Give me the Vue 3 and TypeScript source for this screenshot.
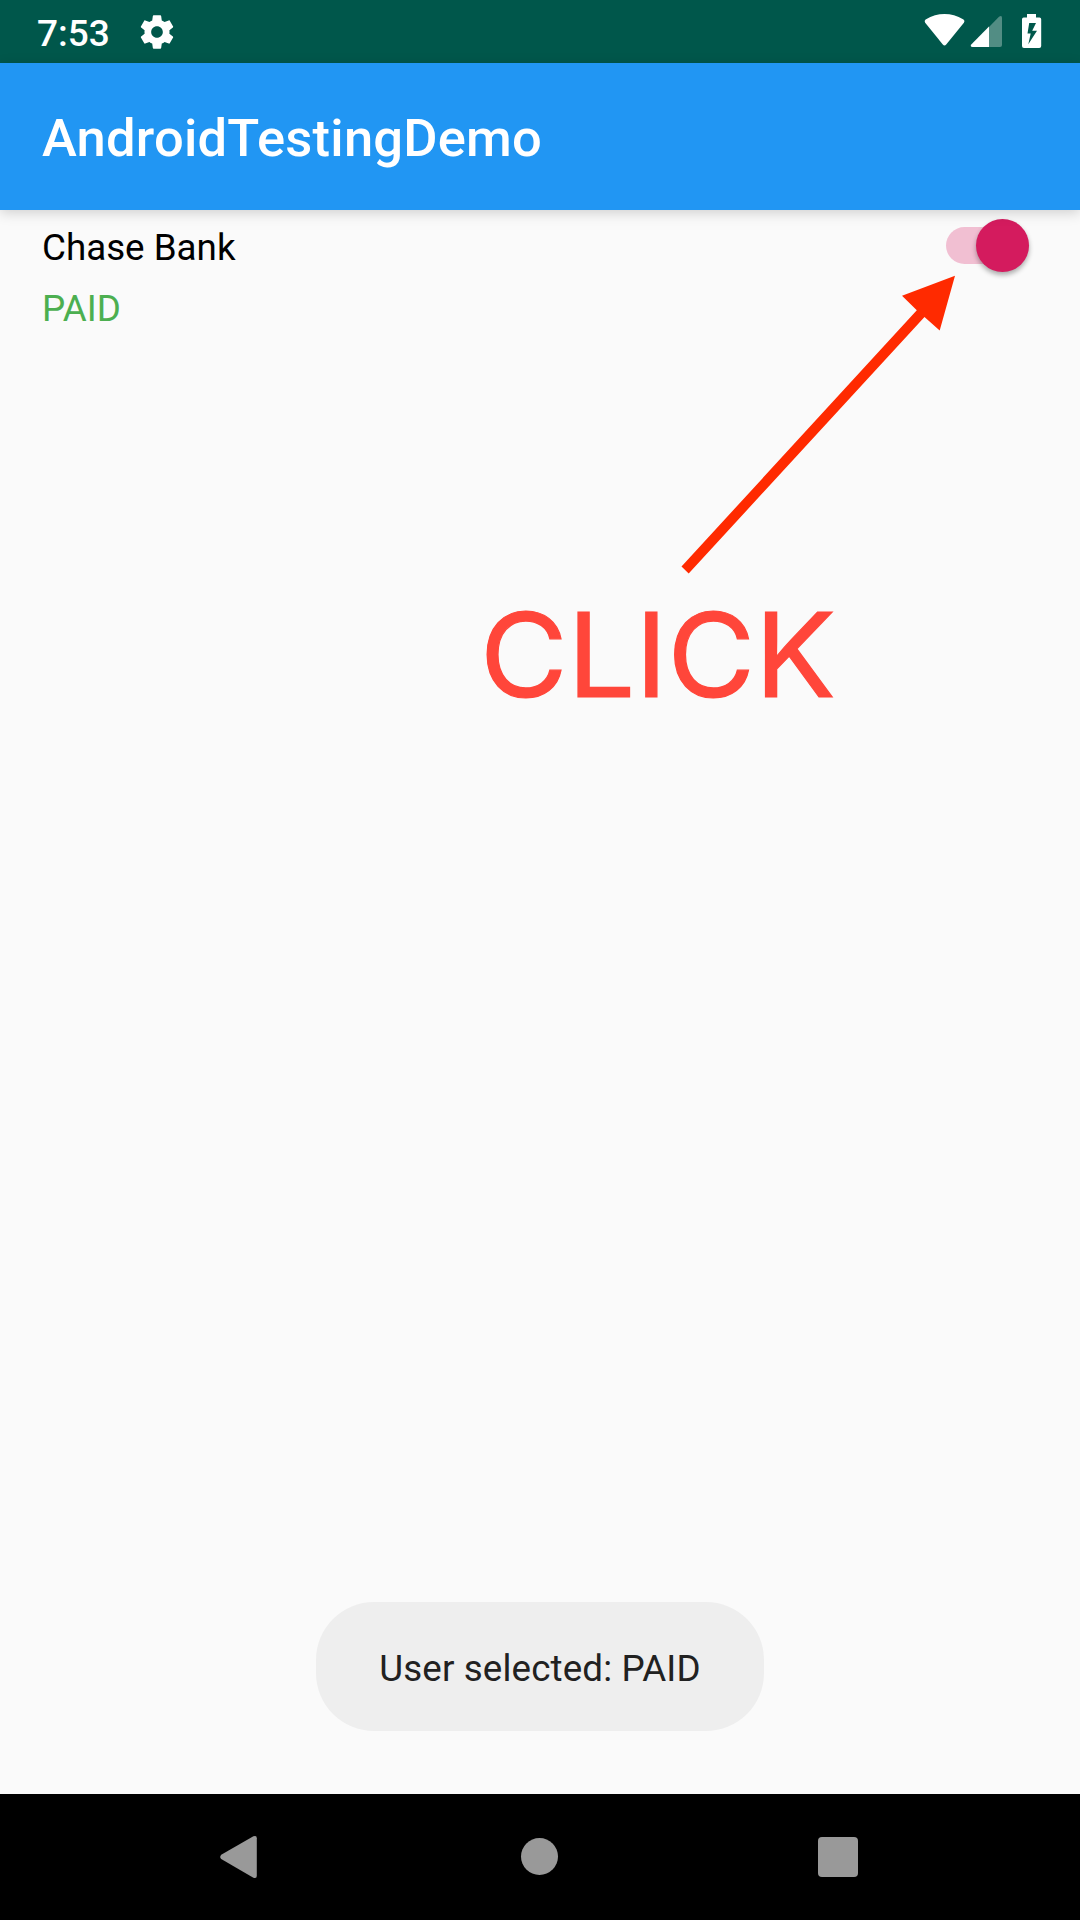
<script setup lang="ts">
import { ref, computed } from 'vue'

const paid = ref(true)
const status = computed<string>(() => (paid.value ? 'PAID' : 'UNPAID'))
</script>

<template>
  <div class="screen">
    <header class="status-bar">
      <div class="status-left">
        <span class="clock">7:53</span>
        <svg class="gear" width="40" height="40" viewBox="0 0 24 24">
          <path fill="#fff" fill-rule="evenodd" d="M19.43 12.98c.04-.32.07-.64.07-.98s-.03-.66-.07-.98l2.11-1.65c.19-.15.24-.42.12-.64l-2-3.46c-.12-.22-.39-.3-.61-.22l-2.49 1c-.52-.4-1.08-.73-1.69-.98l-.38-2.65C14.46 2.18 14.25 2 14 2h-4c-.25 0-.46.18-.49.42l-.38 2.65c-.61.25-1.17.59-1.69.98l-2.49-1c-.23-.09-.49 0-.61.22l-2 3.46c-.13.22-.07.49.12.64l2.11 1.65c-.04.32-.07.65-.07.98s.03.66.07.98l-2.11 1.65c-.19.15-.24.42-.12.64l2 3.46c.12.22.39.3.61.22l2.49-1c.52.4 1.08.73 1.69.98l.38 2.65c.03.24.24.42.49.42h4c.25 0 .46-.18.49-.42l.38-2.65c.61-.25 1.17-.59 1.69-.98l2.49 1c.23.09.49 0 .61-.22l2-3.46c.12-.22.07-.49-.12-.64l-2.11-1.65zM12 15.5c-1.93 0-3.5-1.57-3.5-3.5s1.57-3.5 3.5-3.5 3.5 1.57 3.5 3.5-1.57 3.5-3.5 3.5z" />
        </svg>
      </div>
      <svg class="status-icons" width="180" height="63" viewBox="0 0 180 63">
        <path fill="#fff" d="M25.2 22.8Q23.8 21 25.6 19.6C32 15.500 38 14 44.500 14S57 15.500 63.500 19.600Q65.300 21 63.900 22.800L46.200 44.600Q44.500 46.300 42.800 44.600Z" />
        <path fill="#fff" fill-opacity=".32" d="M89 27L99 16.700Q102 14.800 102 17.800V45Q102 47 100 47H89Z" />
        <path fill="#fff" d="M89 26.600V47H72.500Q69.500 46.500 71.500 44.200Z" />
        <path fill="#fff" fill-rule="evenodd" d="M127 14H136V17.500H139.500Q141.200 17.500 141.200 19.200V46Q141.200 48 139.200 48H124Q122 48 122 46V19.200Q122 17.500 123.700 17.500H127ZM129.200 23L127.500 33.500H130.700L128.300 44.300L137 30.700H132.200L136 23Z" />
      </svg>
    </header>

    <div class="app-bar"><h1>AndroidTestingDemo</h1></div>

    <main class="content">
      <section class="row">
        <div class="labels">
          <div class="name">Chase Bank</div>
          <div class="state">{{ status }}</div>
        </div>
        <div class="switch" role="switch" :aria-checked="paid" @click="paid = !paid">
          <div class="thumb"></div>
        </div>
      </section>
      <div class="toast">User selected: {{ status }}</div>
    </main>

    <nav class="nav-bar">
      <svg width="1080" height="126" viewBox="0 0 1080 126">
        <g fill="#999">
          <path d="M221.200 60.700L253.400 42.300Q256.800 41 256.800 44.300V81.700Q256.800 85 253.400 83.700L221.200 65Q219.200 63 221.200 60.700Z" />
          <circle cx="539.500" cy="62.500" r="18.500" />
          <rect x="818" y="43" width="40" height="40" rx="4" />
        </g>
      </svg>
    </nav>

    <svg class="arrow" width="290" height="310" viewBox="0 0 290 310">
      <path fill="#ff2a00" d="M275 5.700L222 25.800L236.800 40.300L1.500 296.500L8.700 303.500L244.500 47L259.700 60.500Z" />
    </svg>
    <div class="callout">CLICK</div>
  </div>
</template>

<style>
body {
  background: #fafafa;
}
</style>

<style scoped>
.screen {
  position: relative;
  display: flex;
  flex-direction: column;
  width: 1080px;
  height: 1920px;
  overflow: hidden;
  background: #fafafa;
  font-family: Roboto, sans-serif;
}
.status-bar {
  display: flex;
  justify-content: space-between;
  height: 63px;
  background: #00574b;
}
.status-left {
  display: flex;
  align-items: center;
  padding-left: 37px;
}
.clock {
  width: 72px;
  margin-right: 28px;
  color: #fff;
  font-size: 37px;
  font-weight: 500;
  line-height: 43px;
  white-space: nowrap;
  padding-top: 3px;
}
.app-bar {
  display: flex;
  align-items: center;
  height: 147px;
  padding-left: 42px;
  background: #2196f3;
  box-shadow: 0 3px 12px rgba(0, 0, 0, 0.17);
  z-index: 1;
}
h1 {
  margin: 3px 0 0;
  color: #fff;
  font-size: 52.5px;
  font-weight: 500;
  letter-spacing: 0.21px;
  line-height: 62px;
}
.content {
  display: flex;
  flex: 1;
  flex-direction: column;
  justify-content: space-between;
  align-items: center;
  padding-bottom: 63px;
}
.row {
  display: flex;
  justify-content: space-between;
  align-self: stretch;
  padding: 7px 51px 0 42px;
}
.labels {
  font-size: 36.75px;
  line-height: 61px;
}
.name {
  color: #000;
}
.state {
  color: #4caf50;
}
.switch {
  display: flex;
  align-items: center;
  justify-content: flex-end;
  width: 83px;
  height: 37px;
  margin-top: 10px;
  border-radius: 19px;
  background: #f1bfd2;
}
.thumb {
  flex: none;
  width: 53px;
  height: 53px;
  border-radius: 50%;
  background: #d41b5e;
  box-shadow: 0 3px 5px rgba(0, 0, 0, 0.32);
}
.toast {
  display: flex;
  align-items: center;
  justify-content: center;
  box-sizing: border-box;
  width: 448px;
  height: 129px;
  padding-top: 3px;
  border-radius: 58px;
  background: #eee;
  color: #212121;
  font-size: 36.75px;
  letter-spacing: 0.13px;
  white-space: nowrap;
}
.nav-bar {
  height: 126px;
  background: #000;
}
.nav-bar svg {
  display: block;
}
.arrow {
  position: absolute;
  left: 680px;
  top: 270px;
}
.callout {
  position: absolute;
  left: 479.5px;
  top: 583px;
  color: #ff463a;
  font-family: Inter, "Liberation Sans", sans-serif;
  font-size: 117px;
  line-height: 143px;
  -webkit-text-stroke: 1.2px #ff463a;
  transform: scaleX(1.0245);
  transform-origin: left;
}
</style>
